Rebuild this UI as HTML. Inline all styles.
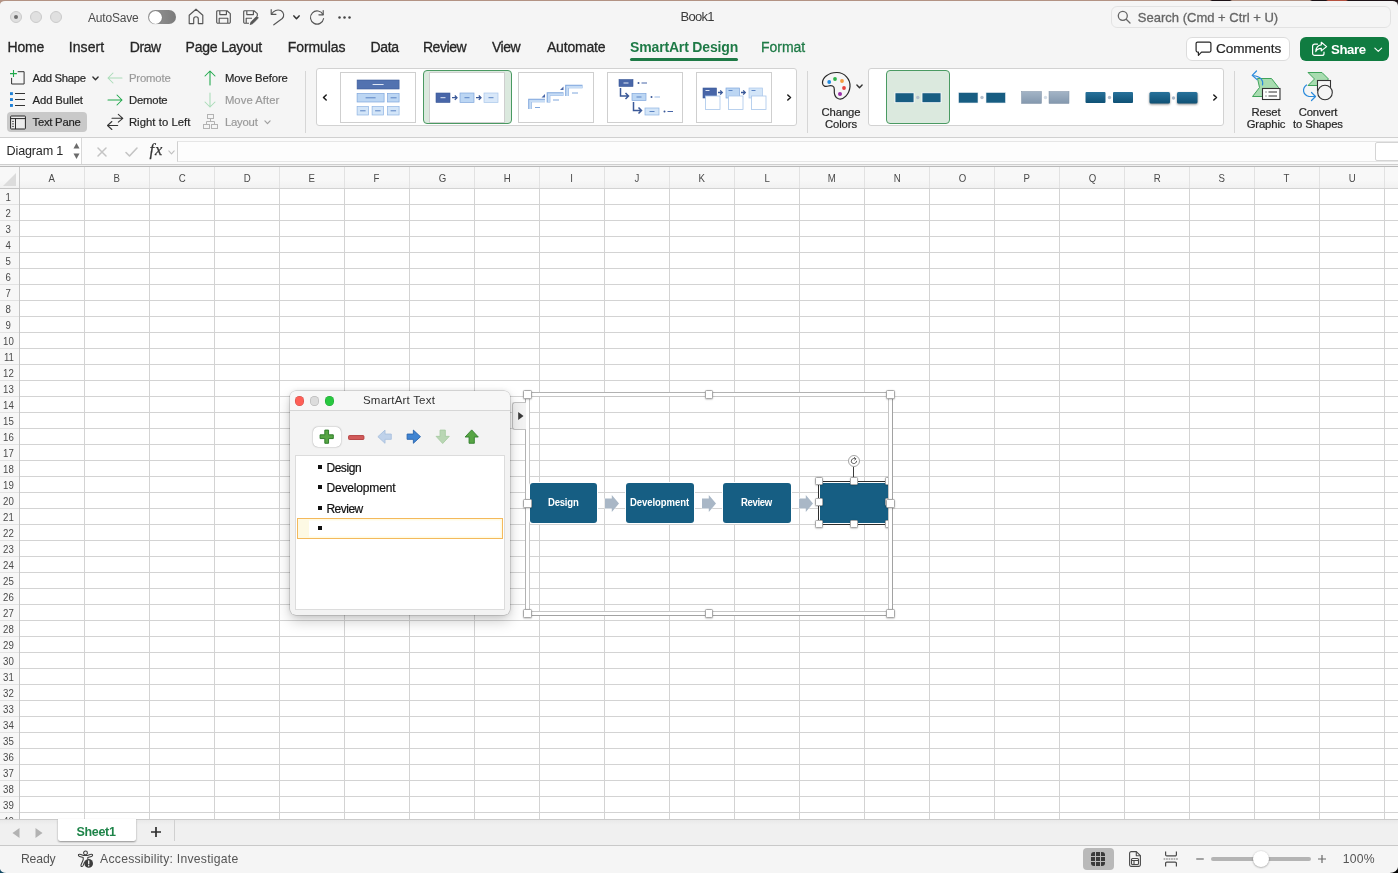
<!DOCTYPE html>
<html lang="en">
<head>
<meta charset="utf-8">
<title>Book1</title>
<style>
*{box-sizing:border-box;margin:0;padding:0}
html,body{width:1398px;height:873px;overflow:hidden}
body{background:#1a1418;font-family:"Liberation Sans",sans-serif;color:#262626;position:relative}
.abs{position:absolute}
#desk{position:absolute;left:0;top:0;width:1398px;height:12px;background:linear-gradient(90deg,#b39384 0,#b39384 1210px,#1c1216 1212px,#1c1216 1230px,#b39384 1232px,#b39384 1310px,#1c1216 1312px,#1c1216 1326px,#b4513f 1328px,#b4513f 1346px,#1c1216 1348px)}
#c{position:absolute;left:0;top:-1px;width:1398px;height:873px;will-change:transform}
#win{position:absolute;left:0;top:1px;width:1398px;height:872px;background:#f5f5f5;border-radius:5px 5.5px 8.5px 6.5px / 3.5px 4.5px 6px 4.5px;overflow:hidden}
.t{position:absolute;white-space:nowrap;line-height:1}
svg{position:absolute;overflow:visible}
/* title bar */
.tl{position:absolute;width:12px;height:12px;border-radius:50%;background:#e0e0e0;border:1px solid #c9c9c9;top:11px}
/* tabs */
.tab{position:absolute;top:39.300px;font-size:14px;line-height:16px;color:#262626;white-space:nowrap;-webkit-text-stroke:0.3px #262626}
/* ribbon */
.rb{position:absolute;font-size:11.3px;line-height:14px;white-space:nowrap;color:#262626;-webkit-text-stroke:0.2px #262626}
.rb.dis{color:#9a9a9a;-webkit-text-stroke:0.2px #9a9a9a}
.sep{position:absolute;width:1px;background:#d6d6d6}
/* grid */
#grid{position:absolute;left:0;top:188px;width:1398px;height:631px;background-color:#fff;
background-image:linear-gradient(90deg,#d3d3d3 1px,transparent 1px),linear-gradient(180deg,#d3d3d3 1px,transparent 1px);
background-size:65px 16px,65px 16px;background-position:19px 0,0 0;overflow:hidden}
#colhdr{position:absolute;left:0;top:167px;width:1398px;height:22px;background:linear-gradient(#f8f8f8 60%,#f1f1f1);border-bottom:1px solid #c4c4c4}
.ch{position:absolute;top:0;width:65px;height:21px;text-align:center;font-size:11.5px;line-height:22px;color:#4a4a4a;border-right:1px solid #e2e2e2}
.ch span{display:inline-block;transform:scaleX(.84)}
#rowhdr{position:absolute;left:0;top:0;width:20px;height:640px;background:#f7f7f7;border-right:1px solid #c4c4c4;border-top:1px solid #c4c4c4}
.rh{position:absolute;left:0;width:19px;height:16px;text-align:center;font-size:11.5px;line-height:17.5px;color:#4a4a4a;border-bottom:1px solid #e2e2e2}
.rh span{display:inline-block;transform:translateX(-1px) scaleX(.84)}
.box{position:absolute;background:#165e83;border-radius:3px;box-shadow:0 0 0 1px #fff}
.bt{position:absolute;color:#fff;font-size:10.600px;line-height:12px;font-weight:bold;white-space:nowrap;transform:scaleX(.9);transform-origin:0 50%}
.h{position:absolute;width:8.500px;height:8.500px;background:#fff;border:1px solid #a8a8a8;border-radius:1.500px;box-shadow:0 .5px 1.500px rgba(0,0,0,.3)}
.bl{position:absolute;left:28px;width:3.500px;height:3.500px;background:#111}
.pt{position:absolute;left:36px;font-size:12px;line-height:14px;color:#111;white-space:nowrap;-webkit-text-stroke:.2px #111}
</style>
</head>
<body>
<div id="desk"></div>
<div class="abs" style="left:0;top:860px;width:20px;height:13px;background:#134a64"></div>
<div class="abs" style="left:1378px;top:860px;width:20px;height:13px;background:#050505"></div>
<div id="win"><div id="c">

<!-- ===== TITLE BAR ===== -->
<div id="titlebar" class="abs" style="left:0;top:0;width:1398px;height:33px">
  <div class="tl" style="left:10px"></div>
  <div class="abs" style="left:14px;top:15px;width:4px;height:4px;border-radius:50%;background:#6e6e6e"></div>
  <div class="tl" style="left:30px"></div>
  <div class="tl" style="left:50px"></div>
  <div class="t" id="autosave" style="left:88.0px;top:11.5px;font-size:12px;color:#4d4d4d;letter-spacing:-0.20px">AutoSave</div>
  <!-- toggle -->
  <div class="abs" style="left:148px;top:10px;width:28px;height:14px;border-radius:7px;background:linear-gradient(90deg,#9a9a9a,#7a7a7a)"></div>
  <div class="abs" style="left:148.5px;top:10.5px;width:13px;height:13px;border-radius:50%;background:#fff;box-shadow:0 0 1px rgba(0,0,0,.5)"></div>
  <!-- home -->
  <svg style="left:188px;top:8px" width="16" height="17" viewBox="0 0 16 17" fill="none" stroke="#555" stroke-width="1.15" stroke-linejoin="round" stroke-linecap="round"><path d="M1.2 7.2L8 1.2l6.8 6V15.6H10.3V11a2.3 2.3 0 0 0-4.6 0v4.6H1.2Z"/></svg>
  <!-- save -->
  <svg style="left:216px;top:10px" width="15" height="14" viewBox="0 0 15 14" fill="none" stroke="#555" stroke-width="1.15" stroke-linejoin="round"><path d="M1.7.7H11L14.3 3.6V12a1.2 1.2 0 0 1-1.2 1.2H1.9A1.2 1.2 0 0 1 .7 12V1.7A1 1 0 0 1 1.7.7Z"/><path d="M3.8.9V4.6H10.4V.9"/><path d="M3.2 13V8.2H11.8V13"/></svg>
  <!-- save as -->
  <svg style="left:243px;top:10px" width="16" height="15" viewBox="0 0 16 15" fill="none" stroke="#555" stroke-width="1.15" stroke-linejoin="round"><path d="M6 13.2H1.9A1.2 1.2 0 0 1 .7 12V1.7A1 1 0 0 1 1.7.7H11L14.3 3.6V6"/><path d="M3.8.9V4.6H10.4V.9"/><path d="M3.2 13V8.2H9"/><path d="M7.2 14.6L8 11.9 13 6.9a1.1 1.1 0 0 1 1.7 1.7L9.8 13.6Z" fill="#555" stroke-width=".8"/></svg>
  <!-- undo -->
  <svg style="left:270px;top:8px" width="15" height="18" viewBox="0 0 15 18" fill="none" stroke="#555" stroke-width="1.15" stroke-linecap="round" stroke-linejoin="round"><path d="M1.2 1.5V6.3H6"/><path d="M1.6 6C3.5 2.6 7.5 1 10.8 2.6 14 4.300 14.600 8 12.300 10.500L3.800 16.800"/></svg>
  <svg style="left:293px;top:15px" width="7" height="5" viewBox="0 0 7 5" fill="none" stroke="#333" stroke-width="1.5" stroke-linecap="round" stroke-linejoin="round"><path d="M.9.900L3.500 3.700 6.100.900"/></svg>
  <!-- redo -->
  <svg style="left:309px;top:9px" width="16" height="16" viewBox="0 0 16 16" fill="none" stroke="#555" stroke-width="1.15" stroke-linecap="round" stroke-linejoin="round"><path d="M14.200 1.500V5.800H9.900"/><path d="M14 5.600A6.600 6.600 0 1 0 14.600 9.500"/></svg>
  <!-- dots -->
  <svg style="left:338px;top:16px" width="13" height="3" viewBox="0 0 13 3" fill="#444"><circle cx="1.500" cy="1.500" r="1.250"/><circle cx="6.500" cy="1.500" r="1.250"/><circle cx="11.500" cy="1.500" r="1.250"/></svg>
  <div class="t" id="book" style="left:680.6px;top:10px;font-size:13px;color:#3a3a3a;letter-spacing:-0.76px">Book1</div>
  <!-- search -->
  <div class="abs" style="left:1111px;top:6px;width:280px;height:22px;border-radius:6px;background:#f5f5f5;border:1px solid #e2e2e2"></div>
  <svg style="left:1117px;top:10px" width="14" height="14" viewBox="0 0 14 14" fill="none" stroke="#666" stroke-width="1.300" stroke-linecap="round"><circle cx="5.800" cy="5.800" r="4.500"/><path d="M9.200 9.200L13 13"/></svg>
  <div class="t" id="search" style="left:1137.8px;top:11px;font-size:13px;color:#666;-webkit-text-stroke:0.3px #666;letter-spacing:0.01px">Search (Cmd + Ctrl + U)</div>
</div>

<!-- ===== TABS ===== -->
<div id="tabs">
  <div class="tab" id="t_home" style="left:7.5px;letter-spacing:-0.15px">Home</div>
  <div class="tab" id="t_insert" style="left:68.7px;letter-spacing:0.11px">Insert</div>
  <div class="tab" id="t_draw" style="left:129.8px;letter-spacing:-0.47px">Draw</div>
  <div class="tab" id="t_pagelayout" style="left:185.6px;letter-spacing:-0.21px">Page Layout</div>
  <div class="tab" id="t_formulas" style="left:287.8px;letter-spacing:-0.10px">Formulas</div>
  <div class="tab" id="t_data" style="left:370.6px;letter-spacing:-0.39px">Data</div>
  <div class="tab" id="t_review" style="left:422.9px;letter-spacing:-0.43px">Review</div>
  <div class="tab" id="t_view" style="left:491.9px;letter-spacing:-0.47px">View</div>
  <div class="tab" id="t_automate" style="left:546.9px;letter-spacing:-0.17px">Automate</div>
  <div class="tab" id="tabsa" style="left:630.1px;color:#1e7a46;font-weight:bold;-webkit-text-stroke:0;letter-spacing:-0.17px">SmartArt Design</div>
  <div class="tab" id="tabfmt" style="left:761.0px;color:#1e7a46;-webkit-text-stroke:0.3px #1e7a46;letter-spacing:-0.02px">Format</div>
  <div class="abs" style="left:630px;top:57.700px;width:108px;height:3.200px;background:#1e7a46;border-radius:1.600px"></div>
</div>

<!-- ===== RIBBON ===== -->
<div id="ribbon">
  <!-- comments / share -->
  <div class="abs" style="left:1185.500px;top:37px;width:104px;height:24px;border-radius:6px;background:#fff;border:1px solid #dcdcdc"></div>
  <svg style="left:1195px;top:41px" width="17" height="16" viewBox="0 0 17 16" fill="none" stroke="#262626" stroke-width="1.200" stroke-linejoin="round"><path d="M2.600 1.100H14.400A1.500 1.500 0 0 1 15.900 2.600V9.600A1.500 1.500 0 0 1 14.400 11.100H6.500L3.400 14.300V11.100H2.600A1.500 1.500 0 0 1 1.100 9.600V2.600A1.500 1.500 0 0 1 2.600 1.100Z"/></svg>
  <div class="t" id="comments" style="left:1216.0px;top:42px;font-size:13.6px;color:#262626;-webkit-text-stroke:0.2px #262626;letter-spacing:-0.05px">Comments</div>
  <div class="abs" style="left:1300px;top:37px;width:89px;height:24px;border-radius:6px;background:#107c41"></div>
  <svg style="left:1311px;top:41px" width="17" height="16" viewBox="0 0 17 16" fill="none" stroke="#fff" stroke-width="1.200" stroke-linejoin="round" stroke-linecap="round"><path d="M6.500 3.200H3.600A2 2 0 0 0 1.600 5.200V12.400A2 2 0 0 0 3.600 14.400H11A2 2 0 0 0 13 12.400V11"/><path d="M10.300 1.300L15.600 5.600 10.300 9.900V7.400C7.500 7.400 5.800 8.400 4.800 10.600 5 6.800 7 4.200 10.300 3.800Z"/></svg>
  <div class="t" id="share" style="left:1331px;top:42.5px;font-size:13.2px;font-weight:bold;color:#fff;letter-spacing:-0.4px">Share</div>
  <svg style="left:1374px;top:47px" width="8.500" height="5.500" viewBox="0 0 10 6" fill="none" stroke="#fff" stroke-width="1.300" stroke-linecap="round" stroke-linejoin="round"><path d="M1 1L5 5 9 1"/></svg>

  <!-- col 1 -->
  <svg style="left:10px;top:70px" width="15" height="15" viewBox="0 0 15 15" fill="none"><path d="M7.700 1.700H14.100V14H1.600V7.900" stroke="#333" stroke-width="1"/><path d="M3.500 .1V7.100M0 3.600H6.900" stroke="#1ea84a" stroke-width="1.100"/></svg>
  <div class="rb" id="r_addshape" style="left:32.6px;top:71px;letter-spacing:-0.32px">Add Shape</div>
  <svg style="left:92px;top:76px" width="7" height="5" viewBox="0 0 7 5" fill="none" stroke="#333" stroke-width="1.400" stroke-linecap="round" stroke-linejoin="round"><path d="M.9.900L3.500 3.700 6.100.900"/></svg>
  <svg style="left:10px;top:92px" width="15" height="15" viewBox="0 0 15 15" fill="none"><path d="M5 1.500H15M5 7.500H15M5 13.500H15" stroke="#333" stroke-width="1"/><rect x="0" y=".2" width="2.900" height="2.900" fill="#1b7fd6"/><rect x="0" y="6.100" width="2.900" height="2.900" fill="#1b7fd6"/><rect x="0" y="12" width="2.900" height="2.900" fill="#1b7fd6"/></svg>
  <div class="rb" id="r_addbullet" style="left:32.6px;top:93px;letter-spacing:-0.12px">Add Bullet</div>
  <div class="abs" style="left:7px;top:112px;width:80px;height:20px;border-radius:4px;background:#c9c9c9"></div>
  <svg style="left:10px;top:114.500px" width="16" height="15" viewBox="0 0 16 15" fill="none" stroke="#262626" stroke-width="1"><rect x="0.600" y="1" width="14.800" height="13" rx="0.600" fill="#ececec"/><path d="M0.600 3.600H15.400M5.500 3.600V14"/><path d="M2.200 6.400H3.800M2.200 8.900H3.800M2.200 11.400H3.800" stroke-width=".9"/></svg>
  <div class="rb" id="r_textpane" style="left:32.5px;top:115px;letter-spacing:-0.25px">Text Pane</div>

  <!-- col 2 -->
  <svg style="left:107px;top:72px" width="16" height="12" viewBox="0 0 16 12" fill="none" stroke="#a9dcb8" stroke-width="1.050" stroke-linecap="round" stroke-linejoin="round"><path d="M15 6H1M6 1L1 6 6 11"/></svg>
  <div class="rb dis" id="r_promote" style="left:128.9px;top:71px;letter-spacing:-0.13px">Promote</div>
  <svg style="left:107px;top:94px" width="16" height="12" viewBox="0 0 16 12" fill="none" stroke="#1ea84a" stroke-width="1.050" stroke-linecap="round" stroke-linejoin="round"><path d="M1 6H15M10 1L15 6 10 11"/></svg>
  <div class="rb" id="r_demote" style="left:128.9px;top:93px;letter-spacing:-0.16px">Demote</div>
  <svg style="left:107px;top:113px" width="17" height="18" viewBox="0 0 17 18" fill="none" stroke="#333" stroke-width="1.050" stroke-linejoin="round" stroke-linecap="round"><path d="M5 5.300H15.600M11.300 1.400L15.800 5.300 11.300 9.200"/><path d="M10.700 12.500H.8M4.900 8.500L.5 12.500 4.900 16.500"/></svg>
  <div class="rb" id="r_rtl" style="left:128.9px;top:115px;letter-spacing:0.05px">Right to Left</div>

  <!-- col 3 -->
  <svg style="left:204px;top:70px" width="12" height="16" viewBox="0 0 12 16" fill="none" stroke="#1ea84a" stroke-width="1.050" stroke-linecap="round" stroke-linejoin="round"><path d="M6 15V1M1 6L6 1 11 6"/></svg>
  <div class="rb" id="r_movebefore" style="left:224.9px;top:71px;letter-spacing:-0.11px">Move Before</div>
  <svg style="left:204px;top:92px" width="12" height="16" viewBox="0 0 12 16" fill="none" stroke="#a9dcb8" stroke-width="1.050" stroke-linecap="round" stroke-linejoin="round"><path d="M6 1V15M1 10L6 15 11 10"/></svg>
  <div class="rb dis" id="r_moveafter" style="left:224.9px;top:93px;letter-spacing:0.05px">Move After</div>
  <svg style="left:203px;top:114px" width="15" height="15" viewBox="0 0 15 15" fill="none" stroke="#b3b3b3" stroke-width="1"><rect x="4.500" y="0.500" width="6" height="4"/><rect x="0.500" y="10.500" width="6" height="4"/><rect x="8.500" y="10.500" width="6" height="4"/><path d="M7.500 4.500V7.500M3.500 10.500V7.500H11.500V10.500"/></svg>
  <div class="rb dis" id="r_layout" style="left:224.9px;top:115px;letter-spacing:-0.20px">Layout</div>
  <svg style="left:264px;top:120px" width="7" height="5" viewBox="0 0 7 5" fill="none" stroke="#a0a0a0" stroke-width="1.200" stroke-linecap="round" stroke-linejoin="round"><path d="M.9.900L3.500 3.700 6.100.900"/></svg>

  <div class="sep" style="left:305px;top:71px;height:62px"></div>

  <!-- LAYOUT GALLERY -->
  <div class="abs" style="left:316px;top:68px;width:481px;height:58px;background:#fff;border:1px solid #d2d2d2;border-radius:3px"></div>
  <svg style="left:322px;top:93.500px" width="6" height="7" viewBox="0 0 6 7" fill="none" stroke="#1a1a1a" stroke-width="1.500" stroke-linecap="round" stroke-linejoin="round"><path d="M4.200 1L1.500 3.500 4.200 6"/></svg>
  <svg style="left:785.500px;top:93.500px" width="6" height="7" viewBox="0 0 6 7" fill="none" stroke="#1a1a1a" stroke-width="1.500" stroke-linecap="round" stroke-linejoin="round"><path d="M1.800 1L4.500 3.500 1.800 6"/></svg>
  <div class="abs" style="left:340px;top:72px;width:76px;height:51px;background:#fff;border:1px solid #cfcfcf"></div>
  <div class="abs" style="left:423px;top:70px;width:89px;height:54px;background:#dbe9de;border:1.500px solid #4a9a62;border-radius:4px"></div>
  <div class="abs" style="left:429px;top:72px;width:76px;height:51px;background:#fff;border:1px solid #cfcfcf"></div>
  <div class="abs" style="left:518px;top:72px;width:76px;height:51px;background:#fff;border:1px solid #cfcfcf"></div>
  <div class="abs" style="left:607px;top:72px;width:76px;height:51px;background:#fff;border:1px solid #cfcfcf"></div>
  <div class="abs" style="left:696px;top:72px;width:76px;height:51px;background:#fff;border:1px solid #cfcfcf"></div>
  <!-- thumb 1 -->
  <svg style="left:340px;top:72px" width="76" height="51" viewBox="0 0 76 51"><g transform="translate(.6,.5)"><rect x="16.500" y="7.500" width="42" height="9" fill="#5272b0" stroke="#3b5998" stroke-width=".6"/><path d="M32 12H43" stroke="#dfe7f5" stroke-width="1"/><rect x="16.500" y="21" width="27" height="8.500" fill="#bcd6f3" stroke="#7fa6dc" stroke-width=".7"/><path d="M25 25.300H35" stroke="#5b84c4" stroke-width="1"/><rect x="47" y="21" width="11.500" height="8.500" fill="#bcd6f3" stroke="#7fa6dc" stroke-width=".7"/><path d="M50 25.300H56" stroke="#5b84c4" stroke-width="1"/><rect x="16.500" y="34" width="11.500" height="8.500" fill="#d3e5f8" stroke="#8fb4e3" stroke-width=".7"/><path d="M19.500 38.300H25" stroke="#5b84c4" stroke-width="1"/><rect x="31.500" y="34" width="11.500" height="8.500" fill="#d3e5f8" stroke="#8fb4e3" stroke-width=".7"/><path d="M34.500 38.300H40" stroke="#5b84c4" stroke-width="1"/><rect x="47" y="34" width="11.500" height="8.500" fill="#d3e5f8" stroke="#8fb4e3" stroke-width=".7"/><path d="M50 38.300H55.500" stroke="#5b84c4" stroke-width="1"/></g></svg>
  <!-- thumb 2 -->
  <svg style="left:429px;top:72px" width="76" height="51" viewBox="0 0 76 51"><rect x="7" y="21" width="14" height="9.500" fill="#4866a8" stroke="#3b5998" stroke-width=".6"/><path d="M11.500 25.700H16.500" stroke="#dfe7f5" stroke-width="1"/><path d="M23 25.700H27.500M25.800 23.500L28 25.700 25.800 27.900" stroke="#3b5998" stroke-width="1.300" fill="none"/><rect x="31" y="21" width="14" height="9.500" fill="#bcd6f3" stroke="#7fa6dc" stroke-width=".7"/><path d="M35.500 25.700H40.500" stroke="#5b84c4" stroke-width="1"/><path d="M47 25.700H51.500M49.800 23.500L52 25.700 49.800 27.900" stroke="#3b5998" stroke-width="1.300" fill="none"/><rect x="55" y="21" width="14" height="9.500" fill="#d9e8f9" stroke="#a9c6ea" stroke-width=".7"/><path d="M59.500 25.700H64.500" stroke="#5b84c4" stroke-width="1"/></svg>
  <!-- thumb 3 -->
  <svg style="left:518px;top:72px" width="76" height="51" viewBox="0 0 76 51" fill="none"><path d="M12 37V28.500H27" stroke="#7fa6dc" stroke-width="3.600"/><path d="M12.300 37V28.800H27" stroke="#c6dcf5" stroke-width="2.200"/><path d="M17 35.500H22" stroke="#7fa6dc" stroke-width="1"/><path d="M30.500 30.500V22H45.500" stroke="#7fa6dc" stroke-width="3.600"/><path d="M30.800 30.500V22.300H45.500" stroke="#c6dcf5" stroke-width="2.200"/><path d="M35 28H41" stroke="#7fa6dc" stroke-width="1"/><path d="M49 24V14.500H64.500" stroke="#7fa6dc" stroke-width="3.600"/><path d="M49.300 24V14.800H64.500" stroke="#c6dcf5" stroke-width="2.200"/><path d="M54 21H60" stroke="#7fa6dc" stroke-width="1"/><path d="M27 22V25.500H23.500Z" fill="#4866a8"/><path d="M45.500 14.500V18H42Z" fill="#4866a8"/></svg>
  <!-- thumb 4 -->
  <svg style="left:607px;top:72px" width="76" height="51" viewBox="0 0 76 51" fill="none"><rect x="12" y="7.500" width="14" height="7" fill="#4866a8" stroke="#3b5998" stroke-width=".6"/><path d="M16.500 11H21.500" stroke="#dfe7f5" stroke-width="1"/><circle cx="31.500" cy="11" r="1" fill="#3b5998"/><path d="M34.500 11H40" stroke="#4866a8" stroke-width="1"/><path d="M13.500 16V24H21M18.500 21L21.500 24 18.500 27" stroke="#3b5998" stroke-width="1.500"/><rect x="25" y="21.500" width="14" height="7" fill="#bcd6f3" stroke="#7fa6dc" stroke-width=".7"/><path d="M29.500 25H34.500" stroke="#5b84c4" stroke-width="1"/><circle cx="44.500" cy="25" r="1" fill="#3b5998"/><path d="M47.500 25H53" stroke="#9ab9e4" stroke-width="1"/><path d="M26.500 30V38.500H34M31.500 35.500L34.500 38.500 31.500 41.500" stroke="#3b5998" stroke-width="1.500"/><rect x="38" y="36" width="14" height="7" fill="#d3e5f8" stroke="#8fb4e3" stroke-width=".7"/><path d="M42.500 39.500H47.500" stroke="#5b84c4" stroke-width="1"/><circle cx="57.500" cy="39.500" r="1" fill="#3b5998"/><path d="M60.500 39.500H66" stroke="#4866a8" stroke-width="1"/></svg>
  <!-- thumb 5 -->
  <svg style="left:696px;top:72px" width="76" height="51" viewBox="0 0 76 51" fill="none"><rect x="7" y="16" width="13.500" height="10" fill="#4866a8" stroke="#3b5998" stroke-width=".6"/><path d="M9.500 18.500H13.500" stroke="#dfe7f5" stroke-width="1"/><rect x="9.500" y="24" width="14.500" height="13.500" fill="#fff" stroke="#a9c6ea" stroke-width=".8"/><path d="M22 20.500H25.800M24.200 18.400L26.300 20.500 24.200 22.600" stroke="#3b5998" stroke-width="1.300"/><rect x="30" y="16" width="13.500" height="10" fill="#bcd6f3" stroke="#7fa6dc" stroke-width=".7"/><path d="M32.500 18.500H36.500" stroke="#5b84c4" stroke-width="1"/><rect x="32.500" y="24" width="14.500" height="13.500" fill="#fff" stroke="#a9c6ea" stroke-width=".8"/><path d="M45 20.500H48.800M47.200 18.400L49.300 20.500 47.200 22.600" stroke="#3b5998" stroke-width="1.300"/><rect x="53" y="16" width="13.500" height="10" fill="#d3e5f8" stroke="#a9c6ea" stroke-width=".7"/><path d="M55.500 18.500H59.500" stroke="#5b84c4" stroke-width="1"/><rect x="55.500" y="24" width="14.500" height="13.500" fill="#fff" stroke="#a9c6ea" stroke-width=".8"/></svg>

  <div class="sep" style="left:807px;top:71px;height:62px"></div>

  <!-- change colors -->
  <svg style="left:821px;top:71px" width="31" height="31" viewBox="0 0 31 31" fill="none"><path d="M16 1.500C7.500 1.300 1.200 6.800 1.500 12 1.700 15.300 4.500 16 7.500 15 10.500 14 13.500 15 13.300 18.200 13 22 13.600 26.500 17.500 27.800 22.500 29.300 28.300 23.300 29 15.800 29.600 8 23.500 1.700 16 1.500Z" stroke="#262626" stroke-width="1.200"/><circle cx="8.200" cy="11" r="1.900" fill="#1f8ae0"/><circle cx="14" cy="8" r="1.900" fill="#2db24a"/><circle cx="21" cy="10" r="1.900" fill="#f59a3c"/><circle cx="23" cy="17" r="1.900" fill="#e8403a"/><circle cx="19" cy="23" r="2" fill="#9b2fa8"/></svg>
  <svg style="left:856px;top:84px" width="7" height="5" viewBox="0 0 7 5" fill="none" stroke="#333" stroke-width="1.400" stroke-linecap="round" stroke-linejoin="round"><path d="M.9.900L3.500 3.700 6.100.900"/></svg>
  <div class="rb" id="r_change" style="left:811px;top:106px;width:60px;text-align:center;line-height:12px;letter-spacing:-0.12px">Change<br>Colors</div>

  <!-- STYLE GALLERY -->
  <div class="abs" style="left:868px;top:68px;width:356px;height:58px;background:#fff;border:1px solid #d2d2d2;border-radius:3px"></div>
  <div class="abs" style="left:886px;top:70px;width:64px;height:54px;background:#dbe9de;border:1.500px solid #4a9a62;border-radius:4px"></div>
  <svg style="left:868px;top:68px" width="356" height="58" viewBox="0 0 356 58">
    <defs><linearGradient id="g3" x1="0" y1="0" x2="0" y2="1"><stop offset="0" stop-color="#a3b4c6"/><stop offset="1" stop-color="#8498ae"/></linearGradient><linearGradient id="g4" x1="0" y1="0" x2="0" y2="1"><stop offset="0" stop-color="#28729b"/><stop offset="1" stop-color="#0f5175"/></linearGradient></defs>
    <rect x="27" y="24.800" width="19" height="9.900" fill="#175d82" stroke="#fff" stroke-width=".8"/><rect x="54" y="24.800" width="19" height="9.900" fill="#175d82" stroke="#fff" stroke-width=".8"/><circle cx="49.800" cy="29.500" r="1.700" fill="#b4bfcc"/>
    <rect x="90.500" y="24.500" width="19.500" height="10.500" fill="#175d82" stroke="#e8eef3" stroke-width=".6"/><rect x="118" y="24.500" width="19.500" height="10.500" fill="#175d82" stroke="#e8eef3" stroke-width=".6"/><circle cx="114" cy="29.500" r="1.700" fill="#b4bfcc"/>
    <rect x="153.500" y="23.500" width="20" height="12" fill="url(#g3)" stroke="#7e90a4" stroke-width=".5"/><rect x="181" y="23.500" width="20" height="12" fill="url(#g3)" stroke="#7e90a4" stroke-width=".5"/><circle cx="177.500" cy="29.500" r="1.700" fill="#d5dde6"/>
    <rect x="217.500" y="24" width="20" height="11" rx="1" fill="url(#g4)"/><rect x="245" y="24" width="20" height="11" rx="1" fill="url(#g4)"/><circle cx="241.500" cy="29.500" r="1.700" fill="#b4bfcc"/>
    <rect x="281.500" y="24" width="20.500" height="11.500" rx="1.500" fill="url(#g4)" style="filter:drop-shadow(0 1px 1px rgba(0,0,0,.45))"/><rect x="309" y="24" width="20.500" height="11.500" rx="1.500" fill="url(#g4)" style="filter:drop-shadow(0 1px 1px rgba(0,0,0,.45))"/><circle cx="305.500" cy="30" r="1.700" fill="#a9b7c6"/>
  </svg>
  <svg style="left:1211.600px;top:93.500px" width="6" height="7" viewBox="0 0 6 7" fill="none" stroke="#1a1a1a" stroke-width="1.500" stroke-linecap="round" stroke-linejoin="round"><path d="M1.800 1L4.500 3.500 1.800 6"/></svg>

  <div class="sep" style="left:1234px;top:71px;height:62px"></div>

  <!-- reset graphic -->
  <svg style="left:1250px;top:69px" width="33" height="32" viewBox="0 0 33 32" fill="none"><path d="M9.500 9.500H22L29 19H22L16 27H2.500L9 18.500 2.500 9.500Z" transform="translate(0,0)" fill="none"/><path d="M7.500 9.500H21.500L28.500 18.500 21.500 27.500H2.500L9.500 18.500Z" fill="#a8dcb0" stroke="#3fa35a" stroke-width="1"/><rect x="12.500" y="19.500" width="17.500" height="11" fill="#fff" stroke="#333" stroke-width="1.100"/><path d="M15.500 23H16.500M18.500 23H27M15.500 27H16.500M18.500 27H27" stroke="#333" stroke-width="1"/><path d="M12.500 16C13.500 11.500 11 7.500 3 6.500M6.500 2L2.200 6.400 7 10.500" stroke="#2b8bdc" stroke-width="1.200" stroke-linecap="round" stroke-linejoin="round"/></svg>
  <div class="rb" id="r_reset" style="left:1236px;top:106px;width:60px;text-align:center;line-height:12px;letter-spacing:-0.12px">Reset<br>Graphic</div>
  <!-- convert -->
  <svg style="left:1300.500px;top:71px" width="33" height="32" viewBox="0 0 33 32" fill="none"><path d="M7 1.500H21L27.500 8 21 14.500H7L13.500 8Z" fill="#a8dcb0" stroke="#3fa35a" stroke-width="1"/><rect x="16.500" y="9.500" width="13" height="10" fill="#f5f5f5" stroke="#333" stroke-width="1.100"/><circle cx="24" cy="21.500" r="7.300" fill="#f5f5f5" stroke="#333" stroke-width="1.100"/><path d="M5.500 14C1 17.500 1.500 23.500 8 25.500H14M10.500 21.500L14.500 25.500 10.500 29.500" stroke="#2b8bdc" stroke-width="1.200" stroke-linecap="round" stroke-linejoin="round"/></svg>
  <div class="rb" id="r_convert" style="left:1283px;top:106px;width:70px;text-align:center;line-height:12px;letter-spacing:-0.12px">Convert<br>to Shapes</div>

  <div class="abs" style="left:0;top:137px;width:1398px;height:1px;background:#d0d0d0"></div>
</div>

<!-- ===== FORMULA BAR ===== -->
<div id="fbar">
  <div class="abs" style="left:0;top:138px;width:1398px;height:26px;background:#fbfbfb"></div>
  <div class="abs" style="left:0;top:138px;width:82px;height:26px;background:#fff;border-right:1px solid #d9d9d9"></div>
  <div class="t" id="namebox" style="left:6.6px;top:144.5px;font-size:12.6px;color:#262626;letter-spacing:-0.17px">Diagram 1</div>
  <svg style="left:73px;top:142px" width="7" height="18" viewBox="0 0 7 18" fill="#6b6b6b"><path d="M3.500 1L6.500 6.500H.5Z"/><path d="M3.500 17L6.500 11.500H.5Z"/></svg>
  <svg style="left:97px;top:147px" width="10" height="10" viewBox="0 0 10 10" fill="none" stroke="#c4c4c4" stroke-width="1.500" stroke-linecap="round"><path d="M1 1L9 9M9 1L1 9"/></svg>
  <svg style="left:125px;top:147px" width="13" height="10" viewBox="0 0 13 10" fill="none" stroke="#c4c4c4" stroke-width="1.600" stroke-linecap="round" stroke-linejoin="round"><path d="M1 5.500L4.500 9 12 1"/></svg>
  <div class="t" id="fx" style="left:149.500px;top:141.500px;font-size:16.500px;letter-spacing:1px;font-family:'Liberation Serif',serif;font-style:italic;color:#333;-webkit-text-stroke:.25px #333">fx</div>
  <svg style="left:168px;top:150px" width="7" height="5" viewBox="0 0 7 5" fill="none" stroke="#c0c0c0" stroke-width="1.100" stroke-linecap="round" stroke-linejoin="round"><path d="M.8.800L3.500 3.800 6.200.800"/></svg>
  <div class="abs" style="left:177px;top:140.500px;width:1230px;height:21.500px;background:#fdfdfd;border:1px solid #e6e6e6;border-left-color:#d0d0d0"></div>
  <div class="abs" style="left:1375px;top:142px;width:30px;height:19px;background:#fff;border:1px solid #d4d4d4;border-radius:2px"></div>
  <div class="abs" style="left:0;top:164px;width:1398px;height:1px;background:#cfcfcf"></div>
  <div class="abs" style="left:0;top:165px;width:1398px;height:1px;background:#f0f0f0"></div>
  <div class="abs" style="left:0;top:166px;width:1398px;height:1px;background:#b9b9b9"></div>
</div>

<!-- ===== COLUMN HEADERS ===== -->
<div id="colhdr">
  <div class="abs" style="left:0;top:0;width:20px;height:21px;border-right:1px solid #c9c9c9"></div>
  <svg style="left:3px;top:6px" width="14" height="13" viewBox="0 0 14 13"><path d="M13 0V13H0Z" fill="#dcdcdc"/></svg>
  <div class="ch" style="left:20px"><span>A</span></div>
  <div class="ch" style="left:85px"><span>B</span></div>
  <div class="ch" style="left:150px"><span>C</span></div>
  <div class="ch" style="left:215px"><span>D</span></div>
  <div class="ch" style="left:280px"><span>E</span></div>
  <div class="ch" style="left:345px"><span>F</span></div>
  <div class="ch" style="left:410px"><span>G</span></div>
  <div class="ch" style="left:475px"><span>H</span></div>
  <div class="ch" style="left:540px"><span>I</span></div>
  <div class="ch" style="left:605px"><span>J</span></div>
  <div class="ch" style="left:670px"><span>K</span></div>
  <div class="ch" style="left:735px"><span>L</span></div>
  <div class="ch" style="left:800px"><span>M</span></div>
  <div class="ch" style="left:865px"><span>N</span></div>
  <div class="ch" style="left:930px"><span>O</span></div>
  <div class="ch" style="left:995px"><span>P</span></div>
  <div class="ch" style="left:1060px"><span>Q</span></div>
  <div class="ch" style="left:1125px"><span>R</span></div>
  <div class="ch" style="left:1190px"><span>S</span></div>
  <div class="ch" style="left:1255px"><span>T</span></div>
  <div class="ch" style="left:1320px"><span>U</span></div>
  <div class="ch" style="left:1385px"><span>V</span></div>
</div>

<!-- ===== GRID ===== -->
<div id="grid">
  <div id="rowhdr">
    <div class="rh" style="top:0px"><span>1</span></div>
    <div class="rh" style="top:16px"><span>2</span></div>
    <div class="rh" style="top:32px"><span>3</span></div>
    <div class="rh" style="top:48px"><span>4</span></div>
    <div class="rh" style="top:64px"><span>5</span></div>
    <div class="rh" style="top:80px"><span>6</span></div>
    <div class="rh" style="top:96px"><span>7</span></div>
    <div class="rh" style="top:112px"><span>8</span></div>
    <div class="rh" style="top:128px"><span>9</span></div>
    <div class="rh" style="top:144px"><span>10</span></div>
    <div class="rh" style="top:160px"><span>11</span></div>
    <div class="rh" style="top:176px"><span>12</span></div>
    <div class="rh" style="top:192px"><span>13</span></div>
    <div class="rh" style="top:208px"><span>14</span></div>
    <div class="rh" style="top:224px"><span>15</span></div>
    <div class="rh" style="top:240px"><span>16</span></div>
    <div class="rh" style="top:256px"><span>17</span></div>
    <div class="rh" style="top:272px"><span>18</span></div>
    <div class="rh" style="top:288px"><span>19</span></div>
    <div class="rh" style="top:304px"><span>20</span></div>
    <div class="rh" style="top:320px"><span>21</span></div>
    <div class="rh" style="top:336px"><span>22</span></div>
    <div class="rh" style="top:352px"><span>23</span></div>
    <div class="rh" style="top:368px"><span>24</span></div>
    <div class="rh" style="top:384px"><span>25</span></div>
    <div class="rh" style="top:400px"><span>26</span></div>
    <div class="rh" style="top:416px"><span>27</span></div>
    <div class="rh" style="top:432px"><span>28</span></div>
    <div class="rh" style="top:448px"><span>29</span></div>
    <div class="rh" style="top:464px"><span>30</span></div>
    <div class="rh" style="top:480px"><span>31</span></div>
    <div class="rh" style="top:496px"><span>32</span></div>
    <div class="rh" style="top:512px"><span>33</span></div>
    <div class="rh" style="top:528px"><span>34</span></div>
    <div class="rh" style="top:544px"><span>35</span></div>
    <div class="rh" style="top:560px"><span>36</span></div>
    <div class="rh" style="top:576px"><span>37</span></div>
    <div class="rh" style="top:592px"><span>38</span></div>
    <div class="rh" style="top:608px"><span>39</span></div>
    <div class="rh" style="top:624px"><span>40</span></div>
  </div>
</div>

<!-- ===== DIAGRAM ===== -->
<div id="diagram">
  <!-- frame -->
  <div class="abs" style="left:525px;top:392px;width:368px;height:224px;border:1px solid #b2b2b2;border-right-color:#a2a2a2;border-bottom-color:#a2a2a2"></div>
  <div class="abs" style="left:526px;top:393px;width:366px;height:222px;border:3px solid #fff"></div>
  <div class="abs" style="left:529px;top:396px;width:360px;height:216px;border:1px solid #c6c6c6"></div>
  <!-- expand tab -->
  <div class="abs" style="left:512px;top:402px;width:14px;height:28px;background:#f2f2f2;border:1px solid #c2c2c2;border-right:none;border-radius:3px 0 0 3px"></div>
  <svg style="left:518px;top:412px" width="6" height="8" viewBox="0 0 6 8" fill="#3a3a3a"><path d="M.2 0L5.500 4 .2 8Z"/></svg>
  <!-- boxes -->
  <div class="box" style="left:530px;top:483px;width:67px;height:40px"></div>
  <div class="box" style="left:626px;top:483px;width:68px;height:40px"></div>
  <div class="box" style="left:723px;top:483px;width:68px;height:40px"></div>
  <div class="bt" id="b_design" style="left:547.6px;top:496px;letter-spacing:-0.24px">Design</div>
  <div class="bt" id="b_dev" style="left:630.3px;top:496px;letter-spacing:-0.09px">Development</div>
  <div class="bt" id="b_review" style="left:741.2px;top:496px;letter-spacing:-0.40px">Review</div>
  <svg style="left:605px;top:494.500px" width="14" height="17" viewBox="0 0 14 17" fill="#a9b7c6" stroke="#fff" stroke-width="1" paint-order="stroke"><path d="M0 3.400H6.800V0L14 8.500 6.800 17V13.400H0Z"/></svg>
  <svg style="left:702px;top:494.500px" width="14" height="17" viewBox="0 0 14 17" fill="#a9b7c6" stroke="#fff" stroke-width="1" paint-order="stroke"><path d="M0 3.400H6.800V0L14 8.500 6.800 17V13.400H0Z"/></svg>
  <svg style="left:798.500px;top:494.500px" width="14" height="17" viewBox="0 0 14 17" fill="#a9b7c6" stroke="#fff" stroke-width="1" paint-order="stroke"><path d="M0 3.400H6.800V0L14 8.500 6.800 17V13.400H0Z"/></svg>
  <!-- selected 4th box (clipped to frame interior) -->
  <div class="abs" style="left:800px;top:440px;width:88.400px;height:100px;overflow:hidden">
    <div class="abs" style="left:18px;top:41px;width:74px;height:44px;border:1px solid #2e2e2e;background:#fff"></div>
    <div class="abs" style="left:20px;top:43px;width:70px;height:40px;background:#165e83"></div>
    <div class="abs" style="left:53px;top:26px;width:1px;height:12px;background:#3a3a3a"></div>
    <div class="abs" style="left:47.500px;top:14.500px;width:12px;height:12px;border-radius:50%;background:#fff;border:1px solid #a4a4a4"></div>
    <svg style="left:49.500px;top:16.500px" width="8" height="8" viewBox="0 0 8 8" fill="none" stroke="#444" stroke-width=".9" stroke-linecap="round"><path d="M6.600 4.200A2.600 2.600 0 1 1 5.400 1.800"/><path d="M4.400.5L5.900 1.800 4.600 3.200" stroke-linejoin="round"/></svg>
    <div class="h" style="left:14.500px;top:36.700px"></div><div class="h" style="left:49.500px;top:36.700px"></div><div class="h" style="left:84.500px;top:36.700px"></div>
    <div class="h" style="left:14.500px;top:57.700px"></div><div class="h" style="left:84.500px;top:57.700px"></div>
    <div class="h" style="left:14.500px;top:79.700px"></div><div class="h" style="left:49.500px;top:79.700px"></div><div class="h" style="left:84.500px;top:79.700px"></div>
  </div>
  <!-- frame handles -->
  <div class="h" style="left:523.250px;top:390.250px"></div><div class="h" style="left:704.750px;top:390.250px"></div><div class="h" style="left:886.250px;top:390.250px"></div>
  <div class="h" style="left:523.250px;top:499.250px"></div><div class="h" style="left:886.250px;top:499.250px"></div>
  <div class="h" style="left:523.250px;top:609.250px"></div><div class="h" style="left:704.750px;top:609.250px"></div><div class="h" style="left:886.250px;top:609.250px"></div>
</div>

<!-- ===== SMARTART TEXT PANE ===== -->
<div id="pane" class="abs" style="left:290px;top:391px;width:220px;height:224px;background:#f3f3f3;border-radius:6px;box-shadow:0 0 0 .5px rgba(0,0,0,.22),0 6px 14px rgba(0,0,0,.2),0 0 5px rgba(0,0,0,.1);overflow:hidden">
  <div class="abs" style="left:0;top:0;width:220px;height:20px;background:#f7f7f7;border-bottom:1px solid #d6d6d6"></div>
  <div class="abs" style="left:4.500px;top:5px;width:9.500px;height:9.500px;border-radius:50%;background:#fe5f57;box-shadow:inset 0 0 0 .5px rgba(0,0,0,.2)"></div>
  <div class="abs" style="left:19.500px;top:5px;width:9.500px;height:9.500px;border-radius:50%;background:#dcdcdc;box-shadow:inset 0 0 0 .7px rgba(0,0,0,.16)"></div>
  <div class="abs" style="left:34.500px;top:5px;width:9.500px;height:9.500px;border-radius:50%;background:#28c840;box-shadow:inset 0 0 0 .5px rgba(0,0,0,.2)"></div>
  <div class="t" id="ptitle" style="left:73px;top:4px;font-size:11.500px;color:#333;letter-spacing:.2px">SmartArt Text</div>
  <!-- toolbar -->
  <div class="abs" style="left:23px;top:36px;width:28px;height:20px;border-radius:5px;background:#fff;box-shadow:0 0 1.500px rgba(0,0,0,.45)"></div>
  <svg style="left:29.30px;top:38.30px" width="15.40" height="15.40" viewBox="0 0 14 14"><path d="M5.300 1H8.700V5.300H13V8.700H8.700V13H5.300V8.700H1V5.300H5.300Z" fill="#57a544" stroke="#2f7d2a" stroke-width=".9" stroke-linejoin="round"/></svg>
  <svg style="left:58.25px;top:43.75px" width="16.50" height="5.50" viewBox="0 0 15 5"><rect x=".5" y=".5" width="14" height="3.600" rx=".8" fill="#d25a5a" stroke="#b23b3b" stroke-width=".8"/></svg>
  <svg style="left:87.30px;top:38.30px" width="15.40" height="15.40" viewBox="0 0 14 14"><path d="M.8 7L7.300 1V4.600H13V9.400H7.300V13Z" fill="#bfd2ea" stroke="#a9c0de" stroke-width=".8" stroke-linejoin="round"/></svg>
  <svg style="left:116.30px;top:38.30px" width="15.40" height="15.40" viewBox="0 0 14 14"><path d="M13.200 7L6.700 1V4.600H1V9.400H6.700V13Z" fill="#3f84d2" stroke="#2763ad" stroke-width=".8" stroke-linejoin="round"/></svg>
  <svg style="left:145.30px;top:38.30px" width="15.40" height="15.40" viewBox="0 0 14 14"><path d="M7 13.200L1 6.700H4.600V1H9.400V6.700H13Z" fill="#b9d6b4" stroke="#a7cba2" stroke-width=".8" stroke-linejoin="round"/></svg>
  <svg style="left:174.30px;top:38.30px" width="15.40" height="15.40" viewBox="0 0 14 14"><path d="M7 .8L1 7.300H4.600V13H9.400V7.300H13Z" fill="#57a544" stroke="#2f7d2a" stroke-width=".8" stroke-linejoin="round"/></svg>
  <!-- text area -->
  <div class="abs" style="left:4.800px;top:64px;width:210.200px;height:155px;background:#fff;border:1px solid #dcdcdc"></div>
  <div class="abs" style="left:7px;top:127px;width:206px;height:21px;background:#fff;border:1px solid #f4b95c;box-shadow:inset 0 0 0 1.500px #fffbe3"></div>
  <div class="abs" style="left:8px;top:128px;width:11px;height:19px;background:#fdf9e4"></div>
  <div class="bl" style="top:74px"></div><div class="pt" id="p_design" style="left:36.4px;top:70px;letter-spacing:-0.43px">Design</div>
  <div class="bl" style="top:94px"></div><div class="pt" id="p_dev" style="left:36.4px;top:90px;letter-spacing:-0.16px">Development</div>
  <div class="bl" style="top:115px"></div><div class="pt" id="p_review" style="left:36.4px;top:111px;letter-spacing:-0.49px">Review</div>
  <div class="bl" style="top:135px"></div>
</div>

<!-- ===== SHEET TABS ===== -->
<div id="sheetbar">
  <div class="abs" style="left:0;top:819px;width:1398px;height:27px;background:linear-gradient(#e9e9e9,#f0f0f0 5px);border-top:1px solid #cbcbcb;border-bottom:1px solid #c9c9c9"></div>
  <svg style="left:11.700px;top:828px" width="8" height="10" viewBox="0 0 8 10" fill="#b2b2b2"><path d="M7.500 0V10L.5 5Z"/></svg>
  <svg style="left:34.500px;top:828px" width="8" height="10" viewBox="0 0 8 10" fill="#b2b2b2"><path d="M.5 0V10L7.500 5Z"/></svg>
  <div class="abs" style="left:58px;top:820px;width:78.200px;height:21.400px;background:#fff;border-radius:0 0 2.500px 2.500px;box-shadow:0 .5px 2px rgba(0,0,0,.4)"></div>
  <div class="abs" style="left:58px;top:819px;width:78.200px;height:3px;background:#fff"></div>
  <div class="t" id="sheet1" style="left:76.5px;top:826px;font-size:12.500px;font-weight:bold;color:#1e8449;letter-spacing:-0.32px">Sheet1</div>
  <svg style="left:151px;top:827px" width="10" height="10" viewBox="0 0 10 10" fill="none" stroke="#2e2e2e" stroke-width="1.700"><path d="M5 0V10M0 5H10"/></svg>
  <div class="abs" style="left:174px;top:820px;width:1px;height:21px;background:#d0d0d0"></div>
</div>

<!-- ===== STATUS BAR ===== -->
<div id="status">
  <div class="t" id="ready" style="left:20.9px;top:853px;font-size:12.2px;color:#555;letter-spacing:-0.12px">Ready</div>
  <svg style="left:77px;top:850px" width="17" height="18" viewBox="0 0 17 18" fill="none" stroke="#3d3d3d" stroke-width="1.050" stroke-linecap="round" stroke-linejoin="round"><circle cx="8.500" cy="2.900" r="1.900"/><path d="M1.500 4.700Q1.100 6 2.600 6.400L6.200 7.400V9.800L4 15Q3.700 16.500 5 16.500 5.800 16.400 6.100 15.600L7.600 12"/><path d="M1.500 4.700Q2.200 3.900 3.200 4.300L6.500 5.400H10.500L13.800 4.300Q14.800 3.900 15.500 4.700 15.900 6 14.400 6.400L10.800 7.400V8.400"/><circle cx="11.700" cy="13.400" r="4.300" fill="#3d3d3d" stroke="none"/><path d="M11.700 10.900V13.800" stroke="#f5f5f5" stroke-width="1.300"/><circle cx="11.700" cy="15.700" r=".75" fill="#f5f5f5" stroke="none"/></svg>
  <div class="t" id="acc" style="left:100.1px;top:853px;font-size:12.2px;color:#555;letter-spacing:0.24px">Accessibility: Investigate</div>
  <div class="abs" style="left:1083px;top:848px;width:31px;height:22px;border-radius:4px;background:#b9b9b9"></div>
  <svg style="left:1091px;top:852px" width="14" height="14" viewBox="0 0 14 14" fill="#3a3a3a"><rect x="0" y="0" width="14" height="14" rx="3"/><path d="M4.500 0V14M9.500 0V14M0 4.500H14M0 9.500H14" stroke="#b9b9b9" stroke-width="1"/></svg>
  <svg style="left:1129px;top:851px" width="12" height="16" viewBox="0 0 12 16" fill="none" stroke="#4a4a4a" stroke-width="1.100" stroke-linejoin="round"><path d="M2.200 .6H7.300L11.400 4.700V13.800A1.600 1.600 0 0 1 9.800 15.400H2.200A1.600 1.600 0 0 1 .6 13.800V2.200A1.600 1.600 0 0 1 2.200 .6Z"/><path d="M7.300 .6V4.700H11.400"/><rect x="2.500" y="7.500" width="7" height="6" rx="1"/><path d="M2.500 9.500H9.500M5 9.500V13.500"/></svg>
  <svg style="left:1164px;top:850px" width="14" height="18" viewBox="0 0 14 18" fill="none" stroke="#4a4a4a" stroke-width="1.200" stroke-linejoin="round"><path d="M1.600 1.500V4.700A1.200 1.200 0 0 0 2.800 5.900H11.200A1.200 1.200 0 0 0 12.400 4.700V1.500"/><path d="M1.600 16.500V13.300A1.200 1.200 0 0 1 2.800 12.100H11.200A1.200 1.200 0 0 1 12.400 13.300V16.500"/><path d="M-.4 9H14.400" stroke="#9a9a9a" stroke-dasharray="1.700 .8" stroke-width="1.500"/></svg>
  <div class="abs" style="left:1196px;top:858px;width:8px;height:2px;border-radius:1px;background:#a2a2a2"></div>
  <div class="abs" style="left:1211px;top:857px;width:100px;height:4px;border-radius:2px;background:#b4b4b4"></div>
  <div class="abs" style="left:1253px;top:851px;width:16px;height:16px;border-radius:50%;background:#fff;box-shadow:0 0.500px 2px rgba(0,0,0,.4)"></div>
  <svg style="left:1318px;top:855px" width="8" height="8" viewBox="0 0 8 8" fill="none" stroke="#6a6a6a" stroke-width="1.200"><path d="M4 0V8M0 4H8"/></svg>
  <div class="t" id="zoom" style="left:1342.7px;top:853px;font-size:12.2px;color:#555;letter-spacing:0.22px">100%</div>
</div>

</div></div>
</body>
</html>
